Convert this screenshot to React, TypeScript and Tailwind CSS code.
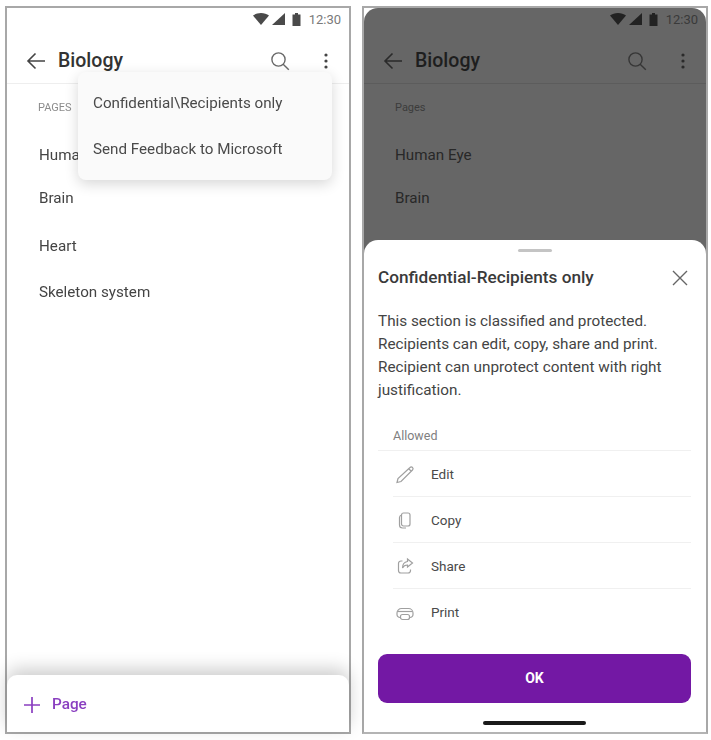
import React from 'react';

const font = { fontFamily: 'Roboto, sans-serif' };

const StatusBar: React.FC<{ color: string; textColor: string }> = ({ color, textColor }) => (
  <div className="h-[31px] flex items-center justify-end pr-[8px] pb-[9px]">
    <svg width="16" height="12" viewBox="0 0 16 12" className="mr-[3px]">
      <path d="M0 2.6C2 1 5 0 8 0s6 1 8 2.6L8 12z" fill={color} />
    </svg>
    <svg width="13" height="12" viewBox="0 0 13 12" className="mr-[7px]">
      <path d="M13 0v12H0z" fill={color} />
    </svg>
    <svg width="9" height="13" viewBox="0 0 9 13" className="mr-[8px]">
      <path d="M3 0h3v1.5h2.5V13H.5V1.5H3z" fill={color} />
    </svg>
    <span className={`text-[13px] leading-none ${textColor}`}>12:30</span>
  </div>
);

const Header: React.FC<{ stroke: string; titleColor: string; borderColor: string }> = ({
  stroke,
  titleColor,
  borderColor,
}) => (
  <div className={`h-[45px] flex items-center pl-[19px] pr-[21px] pb-[1px] border-b ${borderColor}`}>
    <svg width="20" height="18" viewBox="0 0 20 18" fill="none" stroke={stroke} strokeWidth="1.6">
      <path d="M19 9H2M9.5 1.5 2 9l7.5 7.5" />
    </svg>
    <span className={`ml-[12px] text-[19.5px] font-medium leading-none ${titleColor}`}>Biology</span>
    <svg width="20" height="20" viewBox="0 0 20 20" fill="none" stroke={stroke} strokeWidth="1.4" className="ml-auto">
      <circle cx="8.5" cy="8.5" r="6.6" opacity="0.8" />
      <path d="m13.4 13.4 5.4 5.4" opacity="0.8" />
    </svg>
    <svg width="4" height="16" viewBox="0 0 4 16" fill={stroke} className="ml-[34px]">
      <circle cx="2" cy="2" r="1.6" />
      <circle cx="2" cy="8" r="1.6" />
      <circle cx="2" cy="14" r="1.6" />
    </svg>
  </div>
);

const actions = [
  {
    label: 'Edit',
    icon: <path d="M4 15.500 3 19.500l4-1L18.500 7c.8-.8.8-1.700 0-2.500s-1.700-.8-2.500 0zM14.500 5.500 17.500 8.500" />,
  },
  {
    label: 'Copy',
    icon: (
      <>
        <rect x="7.500" y="4" width="8.500" height="13" rx="2" />
        <path d="M7.500 6C6 6.500 5.500 7 5.500 8.500v7.500c0 1.800 1.200 3 3 3h3.500" />
      </>
    ),
  },
  {
    label: 'Share',
    icon: (
      <path d="M8.500 6H7A2.500 2.500 0 0 0 4.500 8.500v7A2.500 2.500 0 0 0 7 18h7a2.500 2.500 0 0 0 2.500-2.500V14.500M13.500 4l5 4-5 4V10c-2.500 0-4 .8-5 3 0-3.500 1.800-6 5-6.500z" />
    ),
  },
  {
    label: 'Print',
    icon: (
      <>
        <path d="M6.500 15.500H6A3 3 0 0 1 3 12.500V11a4.500 4.500 0 0 1 4.500-4.500h7A4.500 4.500 0 0 1 19 11v1.500a3 3 0 0 1-3 3h-.5" />
        <path d="M3.500 9.500h15" />
        <rect x="6.500" y="12.500" width="9" height="5" rx="2" />
      </>
    ),
  },
];

export default function App() {
  return (
    <div className="w-[711px] h-[740px] bg-white flex pl-[5px] pt-[6px] gap-[11px] blur-[0.6px]" style={font}>
      {/* left phone */}
      <div className="w-[346px] h-[728px] border-2 border-[#a8a8a8] bg-white flex flex-col relative shrink-0">
        <StatusBar color="#4a4a4a" textColor="text-[#7a7a7a]" />
        <Header stroke="#444444" titleColor="text-[#333333]" borderColor="border-[#eeeeee]" />

        <div className="flex-1 pl-[32px] text-[15.2px] text-[#444444]">
          <div className="-ml-[1px] text-[11px] text-[#8c8c8c] leading-none mt-[18px]">PAGES</div>
          <div className="mt-[33px] leading-[18px]">Human Eye</div>
          <div className="mt-[25px] leading-[18px]">Brain</div>
          <div className="mt-[30px] leading-[18px]">Heart</div>
          <div className="mt-[28px] leading-[18px]">Skeleton system</div>
        </div>

        <div className="h-[57px] rounded-t-[10px] bg-white shadow-[0_-6px_18px_rgba(0,0,0,0.2)] flex items-center pl-[16px] pt-[2px]">
          <svg width="18" height="18" viewBox="0 0 18 18" fill="none" stroke="#8a3fc0" strokeWidth="1.7">
            <path d="M9 1v16M1 9h16" />
          </svg>
          <span className="ml-[11px] text-[15.3px] font-medium text-[#8a3fc0]">Page</span>
        </div>

        <div className="absolute left-[71px] top-[64px] w-[254px] h-[108px] rounded-[8px] bg-[#fafafa] shadow-[0_4px_14px_rgba(0,0,0,0.16)] flex flex-col text-[15.2px] text-[#4a4a4a] pl-[15px]">
          <div className="mt-[21px] leading-[20px]">Confidential\Recipients only</div>
          <div className="mt-[26px] leading-[20px]">Send Feedback to Microsoft</div>
        </div>
      </div>

      {/* right phone */}
      <div className="w-[346px] h-[728px] border-2 border-[#a8a8a8] border-b-[#b4b4b4] bg-white flex flex-col overflow-hidden shrink-0">
        <div className="h-[246px] -mb-[14px] bg-[#666666] rounded-t-[14px] shrink-0">
          <StatusBar color="#222222" textColor="text-[#3a3a3a]" />
          <Header stroke="#2a2a2a" titleColor="text-[#1e1e1e]" borderColor="border-[#5c5c5c]" />
          <div className="pl-[31px] text-[15.2px] text-[#282828]">
            <div className="text-[11px] text-[#3c3c3c] leading-none mt-[18px]">Pages</div>
            <div className="mt-[33px] leading-[18px]">Human Eye</div>
            <div className="mt-[25px] leading-[18px]">Brain</div>
          </div>
        </div>

        <div className="flex-1 bg-white rounded-t-[14px] flex flex-col pl-[14px] pr-[15px] relative">
          <div className="w-[34px] h-[3px] rounded-full bg-[#c4c4c4] mx-auto mt-[9px]" />
          <div className="flex items-center justify-between mt-[14px] h-[24px]">
            <span className="text-[17.2px] font-medium text-[#3a3a3a]">Confidential-Recipients only</span>
            <svg width="18" height="18" viewBox="0 0 18 18" fill="none" stroke="#666666" strokeWidth="1.4" className="mr-[2px]">
              <path d="M2 2l14 14M16 2 2 16" />
            </svg>
          </div>
          <p className="mt-[20px] text-[15.3px] leading-[23px] text-[#444444]">
            This section is classified and protected.
            <br />
            Recipients can edit, copy, share and print.
            <br />
            Recipient can unprotect content with right
            <br />
            justification.
          </p>
          <div className="mt-[25px] h-[24px] border-b border-[#f0f0f0] pl-[15px] text-[12.5px] leading-[18px] text-[#808080]">
            Allowed
          </div>
          <div className="flex flex-col pl-[15px]">
            {actions.map((action, i) => (
              <div
                key={action.label}
                className={`h-[46px] flex items-center pt-[1px] ${i < actions.length - 1 ? 'border-b border-[#f0f0f0]' : ''}`}
              >
                <svg width="22" height="22" viewBox="0 0 22 22" fill="none" stroke="#a0a0a0" strokeWidth="1.2" className="ml-[1px]">
                  {action.icon}
                </svg>
                <span className="ml-[15px] text-[13.5px] text-[#4a4a4a]">{action.label}</span>
              </div>
            ))}
          </div>
          <button className="mt-[19px] h-[49px] rounded-[9px] bg-[#7318a4] text-white text-[14px] font-bold">OK</button>
          <div className="w-[103px] h-[4px] rounded-full bg-[#1a1a1a] mx-auto mt-[18px]" />
        </div>
      </div>
    </div>
  );
}
